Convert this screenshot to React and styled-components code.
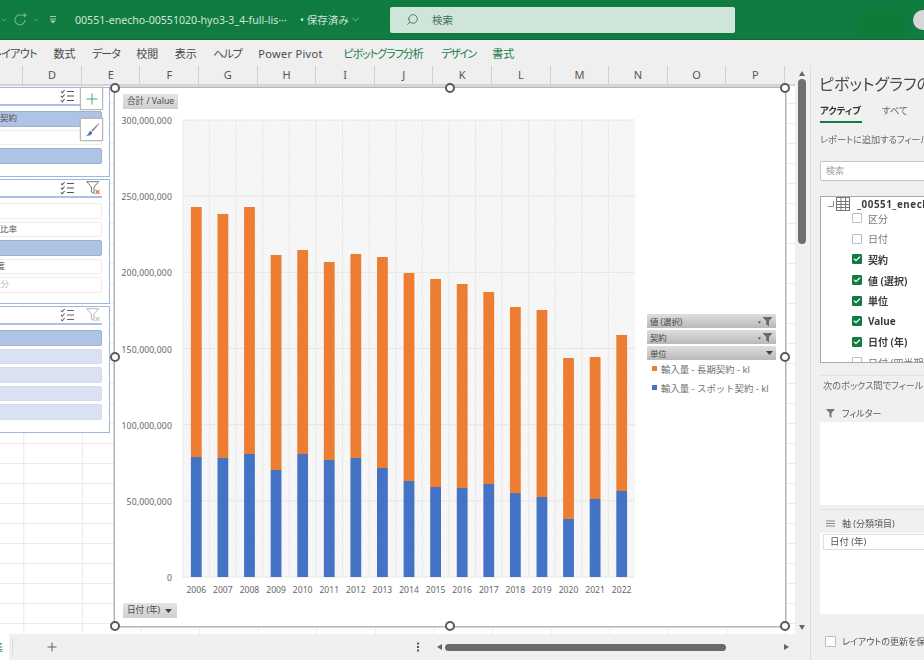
import React from "react";
import styled, { createGlobalStyle } from "styled-components";
import { Check, ChevronDown, Plus, Search } from "lucide-react";

const GlobalStyle = createGlobalStyle`
  html, body { margin: 0; padding: 0; background: #f0f0f0; }
  #root { width: 924px; height: 660px; overflow: hidden; }
  * { box-sizing: border-box; }
`;

const COLUMNS = "CDEFGHIJKLMNOPQ".split("");
const RIBBON_TABS = [
  { label: "レイアウト", track: -0.6 },
  { label: "数式" },
  { label: "データ", track: -1 },
  { label: "校閲" },
  { label: "表示" },
  { label: "ヘルプ", track: -1 },
  { label: "Power Pivot", track: 0.3 },
  { label: "ピボットグラフ分析", accent: true, track: -1, gapBefore: 4 },
  { label: "デザイン", accent: true, track: -1.5, gapBefore: 2 },
  { label: "書式", accent: true },
];

// pixel tops read off the reference: [orange top, blue top]
const BARS = [
  [207, 457], [214, 458], [207, 454], [255, 470], [250, 454], [262, 460],
  [254, 458], [257, 468], [273, 481], [279, 487], [284, 488], [292, 484],
  [307, 493], [310, 497], [358, 519], [357, 499], [335, 491],
];
const TICKS = ["300,000,000", "250,000,000", "200,000,000", "150,000,000", "100,000,000", "50,000,000", "0"];
const PLOT = { left: 183, right: 635, top: 120, bottom: 577 };

const FIELDS = [
  { label: "区分" },
  { label: "日付" },
  { label: "契約", on: true },
  { label: "値 (選択)", on: true },
  { label: "単位", on: true },
  { label: "Value", on: true },
  { label: "日付 (年)", on: true },
  { label: "日付 (四半期)" },
];

const HANDLES = [
  [0, 0], [50, 0], [100, 0],
  [0, 50], [100, 50],
  [0, 100], [50, 100], [100, 100],
];

const Page = styled.div`
  width: 924px;
  height: 660px;
  display: flex;
  flex-direction: column;
  overflow: hidden;
  font-family: "Noto Sans", "Noto Sans CJK JP", sans-serif;
  font-feature-settings: "palt";
  color: #444;
  filter: blur(0.5px);
`;

const TitleBar = styled.header`
  height: 40px;
  flex: none;
  background: #107c41;
  border-bottom: 1px solid #0c6a37;
  display: flex;
  align-items: center;
  color: #cfe5d9;
`;

const QuickTools = styled.div`
  width: 75px;
  flex: none;
  display: flex;
  align-items: center;
  gap: 3px;
  opacity: 0.75;
`;

const FileName = styled.div`
  width: 225px;
  flex: none;
  font-size: 10.6px;
  white-space: nowrap;
  overflow: hidden;
`;

const SaveState = styled.div`
  width: 90px;
  flex: none;
  display: flex;
  align-items: center;
  gap: 2px;
  font-size: 10.5px;
  white-space: nowrap;
`;

const SearchBox = styled.div`
  width: 345px;
  height: 26px;
  flex: none;
  background: #d0e5da;
  border-radius: 2px;
  display: flex;
  align-items: center;
  gap: 13px;
  padding-left: 16px;
  font-size: 10.5px;
  color: #3f6f55;
  svg { transform: scaleX(-1); }
`;

const AccountSlot = styled.div`
  width: 47px;
  height: 29px;
  margin-left: 123px;
  margin-top: 7px;
  flex: none;
  background: #0f7a3a;
`;

const Avatar = styled.div`
  width: 20px;
  height: 20px;
  margin-left: 8px;
  flex: none;
  border-radius: 50%;
  background: #d8d8d8;
`;

const RibbonTabs = styled.nav`
  height: 26px;
  flex: none;
  background: #efefef;
  display: flex;
  align-items: center;
  gap: 16.5px;
  margin-left: -8px;
  font-size: 11px;
  white-space: nowrap;
`;

const RibbonTab = styled.span`
  color: ${(p) => (p.$accent ? "#1c7c4a" : "#4a4a4a")};
  letter-spacing: ${(p) => p.$track || 0}px;
  margin-left: ${(p) => p.$gapBefore || 0}px;
`;

const Workspace = styled.div`
  flex: 1;
  min-height: 0;
  display: flex;
`;

const SheetColumn = styled.div`
  width: 811px;
  flex: none;
  display: flex;
  flex-direction: column;
  border-right: 1px solid #dcdcdc;
`;

const SheetRow = styled.div`
  flex: 1;
  min-height: 0;
  display: flex;
`;

const Sheet = styled.div`
  width: 795px;
  flex: none;
  display: flex;
  flex-direction: column;
  overflow: hidden;
`;

const ColumnHeaders = styled.div`
  height: 20px;
  flex: none;
  display: flex;
  margin-left: -35.3px;
  background: #efefef;
  border-bottom: 2px solid #d4d4d4;
`;

const ColumnHead = styled.div`
  width: 58.6px;
  flex: none;
  text-align: center;
  font-size: 11px;
  line-height: 18px;
  color: #555;
  border-right: 1px solid #cfcfcf;
`;

const Grid = styled.div`
  flex: 1;
  position: relative;
  background-color: #fff;
  background-image:
    linear-gradient(#ebebeb 1px, transparent 1px),
    linear-gradient(90deg, #ebebeb 1px, transparent 1px);
  background-size: 58.6px 20px;
  background-position: 23.3px 17px;
`;

const Slicer = styled.section`
  position: absolute;
  left: -100px;
  top: ${(p) => p.$top}px;
  width: 210px;
  height: ${(p) => p.$height}px;
  background: #fff;
  border: 1px solid #9db6e2;
  padding-right: 7px;
  display: flex;
  flex-direction: column;
`;

const SlicerHead = styled.div`
  height: 18px;
  flex: none;
  margin-bottom: 5px;
  border-bottom: 2px solid #a9c0e8;
  display: flex;
  justify-content: flex-end;
  align-items: center;
  gap: 11px;
  padding-right: 1px;
`;

const HeadSpacer = styled.span`
  width: 15px;
`;

const SlicerItems = styled.div`
  display: flex;
  flex-direction: column;
  gap: 3px;
`;

const SlicerItem = styled.div`
  height: 15.5px;
  flex: none;
  border-radius: 2px;
  font-size: 8.5px;
  line-height: 12px;
  white-space: nowrap;
  padding-left: ${(p) => p.$indent || 6}px;
  color: ${(p) => (p.$muted ? "#bdbdbd" : "#555")};
  background: ${(p) => ({ on: "#afc3e5", soft: "#d9e1f2", off: "#fff" }[p.$kind])};
  border: 1px solid ${(p) => ({ on: "#9db0d2", soft: "#d3dbec", off: "#ededed" }[p.$kind])};
`;

const FloatButton = styled.div`
  position: absolute;
  left: 80px;
  top: ${(p) => p.$top}px;
  width: 23px;
  height: 23px;
  background: #fff;
  border: 1px solid #b9b9b9;
  box-shadow: 0 0 1px #999;
  display: flex;
  align-items: center;
  justify-content: center;
`;

const ChartFrame = styled.div`
  position: absolute;
  left: 115px;
  top: 2px;
  width: 670px;
  height: 538px;
  background: #fff;
  box-shadow: 0 0 0 1.5px #b4b4b4;
`;

const ChartSvg = styled.svg`
  display: block;
  text {
    font-family: "Noto Sans", "Noto Sans CJK JP", sans-serif;
    font-size: 8.6px;
    fill: #666;
  }
`;

const Handle = styled.span`
  position: absolute;
  left: ${(p) => p.$x}%;
  top: ${(p) => p.$y}%;
  width: 10px;
  height: 10px;
  margin: -5px 0 0 -5px;
  border-radius: 50%;
  background: #fff;
  border: 2px solid #5a5a5a;
`;

const FieldButton = styled.div`
  position: absolute;
  left: 8px;
  top: ${(p) => p.$top}px;
  width: ${(p) => p.$width}px;
  height: 15px;
  background: linear-gradient(#e4e4e4, #cfcfcf);
  font-size: 8.6px;
  line-height: 15px;
  padding-left: 4px;
  color: #4a4a4a;
  display: flex;
  align-items: center;
  gap: 5px;
  white-space: nowrap;
`;

const Legend = styled.div`
  position: absolute;
  left: 532px;
  top: 226px;
  width: 129px;
  display: flex;
  flex-direction: column;
  gap: 2px;
`;

const LegendButton = styled.div`
  height: 14px;
  background: linear-gradient(#dedede, #b9b9b9);
  font-size: 8.4px;
  padding: 0 3px;
  color: #4a4a4a;
  display: flex;
  align-items: center;
  justify-content: space-between;
`;

const LegendEntries = styled.div`
  margin-top: -3px;
`;

const LegendEntry = styled.div`
  height: 19px;
  display: flex;
  align-items: center;
  gap: 4px;
  padding-left: 5px;
  font-size: 9.4px;
  font-feature-settings: normal;
  color: #707070;
  white-space: nowrap;
  &::before {
    content: "";
    width: 5px;
    height: 5px;
    background: ${(p) => p.$color};
  }
`;

const VScroll = styled.div`
  width: 13px;
  flex: none;
  display: flex;
  flex-direction: column;
  align-items: center;
  background: #f0f0f0;
  padding-top: 5px;
`;

const ScrollThumb = styled.div`
  width: 8px;
  height: 165px;
  margin-top: 3px;
  border-radius: 4px;
  background: #6f6f6f;
`;

const ScrollArrow = styled.span`
  width: 0;
  height: 0;
  flex: none;
  border-style: solid;
  border-color: transparent;
  ${(p) => p.$dir === "up" && "border-width: 0 3.5px 5px; border-bottom-color: #666;"}
  ${(p) => p.$dir === "down" && "border-width: 5px 3.5px 0; border-top-color: #666; margin-top: auto; margin-bottom: 4px;"}
  ${(p) => p.$dir === "left" && "border-width: 3.5px 5px 3.5px 0; border-right-color: #666;"}
  ${(p) => p.$dir === "right" && "border-width: 3.5px 0 3.5px 5px; border-left-color: #666;"}
`;

const SheetBar = styled.footer`
  height: 26px;
  flex: none;
  background: #f0f0f0;
  display: flex;
  align-items: center;
  color: #555;
`;

const ActiveTab = styled.div`
  width: 9px;
  height: 100%;
  flex: none;
  background: #fff;
  color: #107c41;
  font-size: 10px;
  line-height: 26px;
  text-indent: -7px;
  overflow: hidden;
`;

const TabDivider = styled.div`
  width: 1px;
  height: 16px;
  flex: none;
  margin: 0 32px 0 3px;
  background: #d6d6d6;
`;

const MoreDots = styled.div`
  width: 2px;
  height: 2px;
  margin-left: 358px;
  flex: none;
  background: #555;
  box-shadow: 0 -3.5px 0 #555, 0 3.5px 0 #555;
`;

const HScroll = styled.div`
  margin-left: 18px;
  width: 352px;
  flex: none;
  display: flex;
  align-items: center;
`;

const HThumb = styled.div`
  width: 281px;
  height: 7px;
  margin: 0 58px 0 3px;
  flex: none;
  border-radius: 4px;
  background: #6a6a6a;
`;

const Panel = styled.aside`
  flex: 1;
  min-width: 0;
  overflow: hidden;
  background: #f0f0f0;
  padding-left: 9px;
  display: flex;
  flex-direction: column;
`;

const PanelInner = styled.div`
  width: 220px;
  display: flex;
  flex-direction: column;
`;

const PanelTitle = styled.h2`
  margin: 6px 0 0 -1px;
  font-size: 16px;
  line-height: 24px;
  font-weight: 400;
  letter-spacing: 0.1px;
  color: #4a4a4a;
  white-space: nowrap;
`;

const PanelTabs = styled.div`
  margin-top: 7px;
  display: flex;
  gap: 20px;
  height: 20px;
  font-size: 9.4px;
  line-height: 16px;
`;

const PanelTab = styled.span`
  width: ${(p) => (p.$active ? "42px" : "auto")};
  font-weight: ${(p) => (p.$active ? 700 : 400)};
  color: ${(p) => (p.$active ? "#333" : "#666")};
  border-bottom: ${(p) => (p.$active ? "2px solid #107c41" : "none")};
`;

const Hint = styled.div`
  font-size: 9.2px;
  color: #666;
  white-space: nowrap;
  margin-top: ${(p) => p.$top}px;
  padding-left: ${(p) => p.$indent || 0}px;
  line-height: 13px;
`;

const SearchField = styled.div`
  margin-top: 15px;
  height: 20px;
  background: #fff;
  border: 1px solid #c6c6c6;
  border-radius: 2px;
  font-size: 9px;
  line-height: 18px;
  padding-left: 5px;
  color: #9a9a9a;
`;

const FieldList = styled.div`
  margin-top: 15px;
  height: 167px;
  overflow: hidden;
  background: #fff;
  border: 1px solid #aaa;
`;

const TableRow = styled.div`
  height: 14px;
  margin-bottom: -3px;
  display: flex;
  align-items: center;
  font-size: 9.8px;
  font-weight: 700;
  color: #3c3c3c;
  letter-spacing: 0.55px;
  padding-left: 7px;
  white-space: nowrap;
`;

const FieldRow = styled.div`
  height: 20.6px;
  display: flex;
  align-items: center;
  gap: 6px;
  padding-left: 31px;
  font-size: 10px;
  font-weight: ${(p) => (p.$on ? 700 : 400)};
  color: ${(p) => (p.$on ? "#3c3c3c" : "#777")};
`;

const CheckBox = styled.span`
  width: ${(p) => p.$size || 10}px;
  height: ${(p) => p.$size || 10}px;
  flex: none;
  display: flex;
  align-items: center;
  justify-content: center;
  background: ${(p) => (p.$on ? "#107c41" : "#fff")};
  border: 1px solid ${(p) => (p.$on ? "#107c41" : "#bdbdbd")};
  color: #fff;
  border-radius: 1px;
`;

const AreaRule = styled.div`
  height: 1px;
  background: #e2e2e2;
  margin-top: ${(p) => p.$top}px;
`;

const AreaTitle = styled.div`
  display: flex;
  align-items: center;
  gap: 7px;
  height: 14px;
  padding-left: 6px;
  margin-top: ${(p) => p.$top}px;
  font-size: 9px;
  color: #555;
  white-space: nowrap;
`;

const AreaBox = styled.div`
  height: ${(p) => p.$height}px;
  margin-top: ${(p) => p.$top}px;
  background: #fff;
  padding: 1px 0 0 3px;
`;

const AreaItem = styled.div`
  height: 16px;
  background: #fff;
  border: 1px solid #dedede;
  font-size: 9.4px;
  line-height: 14px;
  padding-left: 6px;
  color: #555;
`;

const KeepLayout = styled.label`
  margin-top: 21px;
  padding-left: 5px;
  display: flex;
  align-items: center;
  gap: 6px;
  font-size: 9px;
  color: #555;
  white-space: nowrap;
`;

function ChecklistIcon({ faded }) {
  return (
    <svg width="15" height="14" viewBox="0 0 15 14" fill="none" stroke={faded ? "#666" : "#555"} strokeWidth="1.1">
      <path d="M1 2.5l1.3 1.3L4.6 1M1 7l1.3 1.3L4.6 5.5M1 11.5l1.3 1.3 2.3-2.8" />
      <path d="M7 2.5h7M7 7h7M7 11.5h7" />
    </svg>
  );
}

function FunnelClearIcon({ active }) {
  return (
    <svg width="15" height="14" viewBox="0 0 15 14" fill="none">
      <path d="M.7.7h12L8 6v6.5L5.4 11V6z" stroke={active ? "#777" : "#b5b5b5"} strokeWidth="1" />
      <path d="M9.5 9l4 4M13.5 9l-4 4" stroke={active ? "#e2703a" : "#c9c9c9"} strokeWidth="1.2" />
    </svg>
  );
}

function BrushIcon() {
  return (
    <svg width="16" height="16" viewBox="0 0 16 16">
      <path d="M14.6 1.2 7.4 8.3l1.4 1.5 6.2-7.9z" fill="#8a8a8a" />
      <path d="M6.8 9c-1.6.2-2 1.4-2.3 2.5-.3 1-1.2 1.7-2.6 2 2.3.6 5.6.2 6.4-2.9z" fill="#3f6fc6" />
    </svg>
  );
}

function DropFunnel() {
  return (
    <svg width="15" height="9" viewBox="0 0 15 9">
      <path d="M0 4.5h3L1.5 6.5z" fill="#444" />
      <path d="M4.5 0h10L11 4v5L8.2 7.5V4z" fill="#6a6a6a" />
    </svg>
  );
}

function DropCaret() {
  return (
    <svg width="7" height="4" viewBox="0 0 7 4">
      <path d="M0 0h7L3.5 4z" fill="#444" />
    </svg>
  );
}

function QuickIcons() {
  return (
    <QuickTools>
      <ChevronDown size={8} strokeWidth={1.6} />
      <svg width="16" height="14" viewBox="0 0 16 14" fill="none" stroke="#9cc8b0" strokeWidth="1.1" style={{ marginLeft: 2 }}>
        <path d="M12 7A5 5 0 1 1 9 2.2h4M10.500 .4 13 2.200l-2 2.300" />
      </svg>
      <ChevronDown size={8} strokeWidth={1.4} />
      <svg width="8" height="9" viewBox="0 0 8 9" style={{ marginLeft: 6 }}>
        <path d="M1 1.500h6M1 4h6" stroke="#cfe5d9" strokeWidth="1" />
        <path d="M1 5.500h6L4 8.500z" fill="#cfe5d9" />
      </svg>
    </QuickTools>
  );
}

function TableIcon() {
  return (
    <svg width="14" height="14" viewBox="0 0 14 14" fill="#fff" stroke="#777" strokeWidth="1" style={{ margin: "0 7px 0 2px", flex: "none" }}>
      <rect x=".5" y=".5" width="13" height="13" />
      <path d="M.5 4.500h13M.5 7.500h13M.5 10.500h13M5 .5v13M9.500 .5v13" />
    </svg>
  );
}

function ChartPlot() {
  const { left, right, top, bottom } = PLOT;
  const band = (right - left) / BARS.length;
  const tickStep = (bottom - top) / 6;
  return (
    <ChartSvg width="670" height="538" viewBox="115 88 670 538">
      <defs>
        <pattern id="dither" width="3" height="3" patternUnits="userSpaceOnUse">
          <rect width="3" height="3" fill="#f9f9f9" />
          <path d="M0 3 3 0" stroke="#f0f0f0" strokeWidth="1" />
        </pattern>
      </defs>
      <rect x={left} y={top} width={right - left} height={bottom - top} fill="url(#dither)" />
      {TICKS.map((t, i) => (
        <g key={t}>
          <line x1={left} x2={right} y1={top + i * tickStep} y2={top + i * tickStep} stroke="#e6e6e6" strokeWidth="1" />
          <text x="172" y={top + i * tickStep + 4} textAnchor="end" style={{ letterSpacing: "0.15px" }}>{t}</text>
        </g>
      ))}
      {BARS.map((_, i) => (
        <line key={i} x1={left + i * band} x2={left + i * band} y1={top} y2={bottom} stroke="#e9e9e9" strokeWidth="1" />
      ))}
      {BARS.map(([orange, blue], i) => {
        const x = left + i * band + band / 2 - 5.4;
        return (
          <g key={2006 + i}>
            <rect x={x} y={orange} width="10.800" height={blue - orange} fill="#ed7d31" />
            <rect x={x} y={blue} width="10.800" height={bottom - blue} fill="#4472c4" />
            <text x={x + 5.4} y="593" textAnchor="middle">{2006 + i}</text>
          </g>
        );
      })}
    </ChartSvg>
  );
}

function FieldsPanel() {
  return (
    <Panel>
      <PanelInner>
        <PanelTitle>ピボットグラフのフィールド</PanelTitle>
        <PanelTabs>
          <PanelTab $active>アクティブ</PanelTab>
          <PanelTab>すべて</PanelTab>
        </PanelTabs>
        <Hint $top={10}>レポートに追加するフィールドを選択してください:</Hint>
        <SearchField>検索</SearchField>
        <FieldList>
          <TableRow>
            <svg width="6" height="6" viewBox="0 0 6 6" style={{ flex: "none" }}>
              <path d="M5.500 0v5.500H0" fill="none" stroke="#888" strokeWidth="1" />
            </svg>
            <TableIcon />
            _00551_enecho
          </TableRow>
          {FIELDS.map((f) => (
            <FieldRow key={f.label} $on={f.on}>
              <CheckBox $on={f.on}>{f.on && <Check size={8} strokeWidth={3.5} />}</CheckBox>
              {f.label}
            </FieldRow>
          ))}
        </FieldList>
        <AreaRule $top={12} />
        <Hint $top={3} $indent={3}>次のボックス間でフィールドをドラッグしてください:</Hint>
        <AreaTitle $top={14}>
          <svg width="9" height="9" viewBox="0 0 9 9"><path d="M0 0h9L5.500 4v5L3.500 7.500V4z" fill="#777" /></svg>
          フィルター
        </AreaTitle>
        <AreaBox $top={2} $height={83} />
        <AreaRule $top={4} />
        <AreaTitle $top={6}>
          <svg width="9" height="7" viewBox="0 0 9 7"><path d="M0 1h9M0 3.500h9M0 6h9" stroke="#888" strokeWidth="1" /></svg>
          軸 (分類項目)
        </AreaTitle>
        <AreaBox $top={3} $height={81}>
          <AreaItem>日付 (年)</AreaItem>
        </AreaBox>
        <KeepLayout>
          <CheckBox $size={11} />
          レイアウトの更新を保留する
        </KeepLayout>
      </PanelInner>
    </Panel>
  );
}

export default function App() {
  return (
    <Page>
      <GlobalStyle />
      <TitleBar>
        <QuickIcons />
        <FileName>00551-enecho-00551020-hyo3-3_4-full-lis···</FileName>
        <SaveState>• 保存済み <ChevronDown size={11} strokeWidth={1.4} /></SaveState>
        <SearchBox>
          <Search size={13} strokeWidth={1.6} />
          検索
        </SearchBox>
        <AccountSlot />
        <Avatar />
      </TitleBar>
      <RibbonTabs>
        {RIBBON_TABS.map((t) => (
          <RibbonTab key={t.label} $accent={t.accent} $track={t.track} $gapBefore={t.gapBefore}>{t.label}</RibbonTab>
        ))}
      </RibbonTabs>
      <Workspace>
        <SheetColumn>
          <SheetRow>
            <Sheet>
              <ColumnHeaders>
                {COLUMNS.map((c) => <ColumnHead key={c}>{c}</ColumnHead>)}
              </ColumnHeaders>
              <Grid>
                <Slicer $top={1} $height={90}>
                  <SlicerHead><ChecklistIcon /><HeadSpacer /></SlicerHead>
                  <SlicerItems>
                    <SlicerItem $kind="on" $indent={81}>長期契約</SlicerItem>
                    <SlicerItem $kind="off">現物</SlicerItem>
                    <SlicerItem $kind="on">スポット</SlicerItem>
                  </SlicerItems>
                </Slicer>
                <Slicer $top={93} $height={125}>
                  <SlicerHead><ChecklistIcon /><FunnelClearIcon active /></SlicerHead>
                  <SlicerItems>
                    <SlicerItem $kind="off">輸入量</SlicerItem>
                    <SlicerItem $kind="off" $indent={81}>輸入比率</SlicerItem>
                    <SlicerItem $kind="on">輸入額</SlicerItem>
                    <SlicerItem $kind="off" $indent={86}>年度</SlicerItem>
                    <SlicerItem $kind="off" $indent={90} $muted>区分</SlicerItem>
                  </SlicerItems>
                </Slicer>
                <Slicer $top={220} $height={127}>
                  <SlicerHead><ChecklistIcon faded /><FunnelClearIcon /></SlicerHead>
                  <SlicerItems>
                    <SlicerItem $kind="on">kl</SlicerItem>
                    <SlicerItem $kind="soft">千円</SlicerItem>
                    <SlicerItem $kind="soft">円/kl</SlicerItem>
                    <SlicerItem $kind="soft">%</SlicerItem>
                    <SlicerItem $kind="soft">t</SlicerItem>
                  </SlicerItems>
                </Slicer>
                <FloatButton $top={1}><Plus size={18} strokeWidth={1.2} color="#2fa56a" /></FloatButton>
                <FloatButton $top={32}><BrushIcon /></FloatButton>
                <ChartFrame>
                  <ChartPlot />
                  <FieldButton $top={6} $width={55}>合計 / Value</FieldButton>
                  <FieldButton $top={515} $width={54}>日付 (年) <DropCaret /></FieldButton>
                  <Legend>
                    <LegendButton>値 (選択)<DropFunnel /></LegendButton>
                    <LegendButton>契約<DropFunnel /></LegendButton>
                    <LegendButton>単位<DropCaret /></LegendButton>
                    <LegendEntries>
                      <LegendEntry $color="#ed7d31">輸入量 - 長期契約 - kl</LegendEntry>
                      <LegendEntry $color="#4472c4">輸入量 - スポット契約 - kl</LegendEntry>
                    </LegendEntries>
                  </Legend>
                  {HANDLES.map(([x, y]) => <Handle key={`${x}-${y}`} $x={x} $y={y} />)}
                </ChartFrame>
              </Grid>
            </Sheet>
            <VScroll>
              <ScrollArrow $dir="up" />
              <ScrollThumb />
              <ScrollArrow $dir="down" />
            </VScroll>
          </SheetRow>
          <SheetBar>
            <ActiveTab>集計</ActiveTab>
            <TabDivider />
            <Plus size={14} strokeWidth={1.6} />
            <MoreDots />
            <HScroll>
              <ScrollArrow $dir="left" />
              <HThumb />
              <ScrollArrow $dir="right" />
            </HScroll>
          </SheetBar>
        </SheetColumn>
        <FieldsPanel />
      </Workspace>
    </Page>
  );
}
